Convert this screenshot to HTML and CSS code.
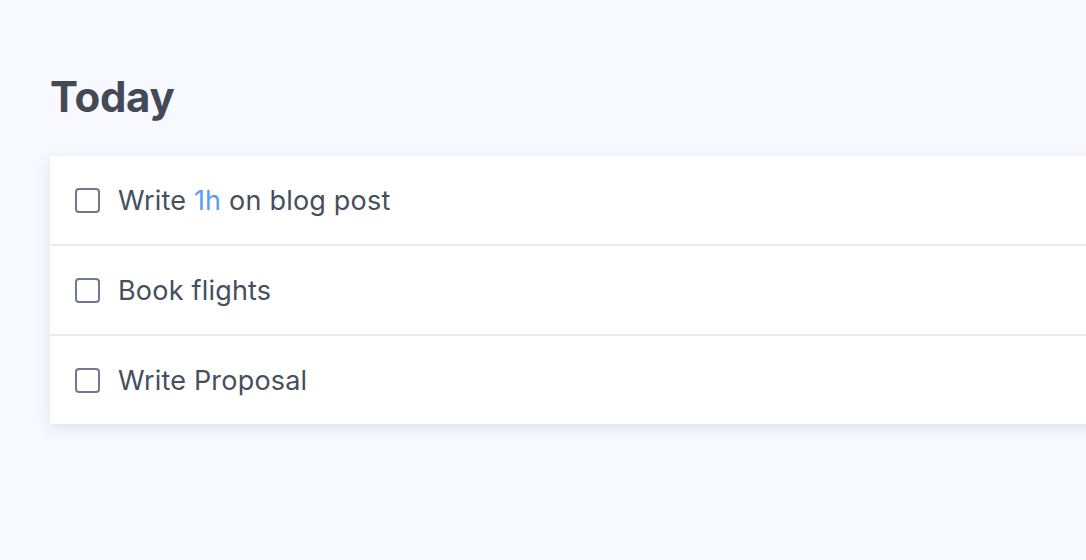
FILE: index.html
```html
<!DOCTYPE html>
<html>
<head>
<meta charset="utf-8">
<link rel="stylesheet" href="styles.css">
</head>
<body>
<main class="page">
  <h1 class="title">Today</h1>
  <ul class="tasks">
    <li class="task"><span class="box"></span><span class="label">Write <span class="dur">1h</span> on blog post</span></li>
    <li class="task"><span class="box"></span><span class="label">Book flights</span></li>
    <li class="task"><span class="box"></span><span class="label">Write Proposal</span></li>
  </ul>
</main>
</body>
</html>
```
FILE: styles.css
```css
html, body {
  margin: 0;
  padding: 0;
  background: #f8f9fe;
  overflow: hidden;
  height: 560px;
}
.page {
  padding: 70px 0 0 50px;
  font-family: Inter, "Noto Sans", sans-serif;
}
.title {
  margin: 0 0 32px 0;
  font-size: 42px;
  line-height: 54px;
  font-weight: 700;
  color: #434a56;
  letter-spacing: -0.3px;
}
.tasks {
  list-style: none;
  margin: 0;
  padding: 0;
  width: 1100px;
  background: #fff;
  box-shadow: 0 4px 14px rgba(160, 170, 200, 0.28);
}
.task {
  display: flex;
  align-items: center;
  gap: 18px;
  height: 88px;
  padding-left: 25px;
  border-bottom: 2px solid #ebebeb;
}
.task:last-child {
  border-bottom: none;
}
.box {
  width: 21px;
  height: 21px;
  border: 2px solid #6e7a8f;
  border-radius: 4px;
  flex: none;
}
.label {
  font-size: 27px;
  letter-spacing: 0.2px;
  color: #464f5e;
}
.dur {
  color: #5b9cf6;
}
```
